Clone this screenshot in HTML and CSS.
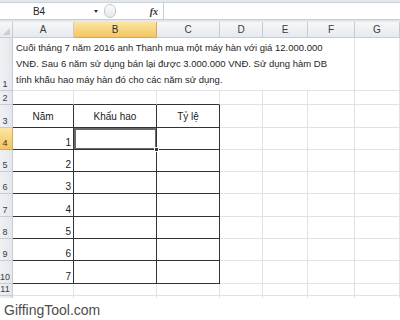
FILE: index.html
```html
<!DOCTYPE html>
<html lang="vi">
<head>
  <meta charset="UTF-8">
  <meta name="viewport" content="width=device-width, initial-scale=1.0">
  <title>Hàm DB - khấu hao</title>
  <link rel="stylesheet" href="styles.css">
</head>
<body>
  <div class="ribbon"></div>
  <!-- thanh công thức -->
  <div class="fbar">
    <div class="namebox"><span class="name">B4</span><span class="drop"></span></div>
    <div class="fx-zone"><span class="knob"></span><span class="fx">fx</span></div>
    <div class="input"></div>
  </div>
  <div class="gap"></div>
  <div class="sheet-wrap">
    <table class="sheet">
      <colgroup>
        <col style="width:13px"><col style="width:61px"><col style="width:83px"><col style="width:63px">
        <col style="width:43px"><col style="width:45px"><col style="width:47px"><col style="width:45px">
      </colgroup>
      <tr class="colhead">
        <th class="corner"><span class="tri"></span></th>
        <th>A</th><th class="on">B</th><th>C</th><th>D</th><th>E</th><th>F</th><th>G</th>
      </tr>
      <tr class="r1">
        <th class="rh">1</th>
        <td colspan="6" class="note">Cuối tháng 7 năm 2016 anh Thanh mua một máy hàn với giá 12.000.000<br>VNĐ. Sau 6 năm sử dụng bán lại được 3.000.000 VNĐ. Sử dụng hàm DB<br>tính khấu hao máy hàn đó cho các năm sử dụng.</td>
        <td></td>
      </tr>
      <tr class="r2">
        <th class="rh">2</th>
        <td class="top"></td><td class="top"></td><td class="top"></td><td></td><td></td><td></td><td></td>
      </tr>
      <tr class="r3">
        <th class="rh">3</th>
        <td class="box head">Năm</td><td class="box head">Khấu hao</td><td class="box head">Tỷ lệ</td><td></td><td></td><td></td><td></td>
      </tr>
      <tr class="rn">
        <th class="rh on">4</th>
        <td class="box num">1</td><td class="box sel"></td><td class="box"></td><td></td><td></td><td></td><td></td>
      </tr>
      <tr class="rn">
        <th class="rh">5</th>
        <td class="box num">2</td><td class="box"></td><td class="box"></td><td></td><td></td><td></td><td></td>
      </tr>
      <tr class="rn">
        <th class="rh">6</th>
        <td class="box num">3</td><td class="box"></td><td class="box"></td><td></td><td></td><td></td><td></td>
      </tr>
      <tr class="rn tall">
        <th class="rh">7</th>
        <td class="box num">4</td><td class="box"></td><td class="box"></td><td></td><td></td><td></td><td></td>
      </tr>
      <tr class="rn">
        <th class="rh">8</th>
        <td class="box num">5</td><td class="box"></td><td class="box"></td><td></td><td></td><td></td><td></td>
      </tr>
      <tr class="rn">
        <th class="rh">9</th>
        <td class="box num">6</td><td class="box"></td><td class="box"></td><td></td><td></td><td></td><td></td>
      </tr>
      <tr class="rn tall">
        <th class="rh">10</th>
        <td class="box num">7</td><td class="box"></td><td class="box"></td><td></td><td></td><td></td><td></td>
      </tr>
      <tr class="r11">
        <th class="rh">11</th>
        <td></td><td></td><td></td><td></td><td></td><td></td><td></td>
      </tr>
      <tr class="r12">
        <th class="rh"></th>
        <td></td><td></td><td></td><td></td><td></td><td></td><td></td>
      </tr>
    </table>
  </div>
  <div class="mark">GiffingTool.com</div>
</body>
</html>
```

FILE: styles.css
```css
html, body {
  margin: 0;
  padding: 0;
}
body {
  width: 400px;
  height: 320px;
  overflow: hidden;
  background: #fff;
  font-family: "Liberation Sans", Arial, sans-serif;
  color: #222;
}
.ribbon {
  height: 2px;
  background: #e2e7ed;
  border-bottom: 1px solid #cbd1d9;
}
/* thanh công thức */
.fbar {
  display: flex;
  height: 16px;
  border-bottom: 1px solid #c6ccd4;
  background: #fff;
}
.namebox {
  width: 102px;
  display: flex;
  align-items: center;
}
.name {
  flex: 1;
  text-align: center;
  font-size: 10px;
  padding-right: 16px;
}
.drop {
  width: 0;
  height: 0;
  border-left: 2px solid transparent;
  border-right: 2px solid transparent;
  border-top: 3px solid #333;
  margin-right: 4px;
}
.fx-zone {
  width: 62px;
  display: flex;
  align-items: center;
  padding-left: 2px;
  box-sizing: border-box;
  border-right: 1px solid #c6ccd4;
}
.knob {
  width: 10px;
  height: 12px;
  border: 1px solid #c3c8ce;
  border-radius: 7px;
  background: linear-gradient(#fafbfc, #e6e9ed);
}
.fx {
  margin-left: auto;
  margin-right: 5px;
  font: italic bold 10px "Liberation Serif", serif;
  color: #333;
}
.input {
  flex: 1;
}
.gap {
  height: 2px;
  background: #e4e8ed;
}
/* bảng tính */
.sheet-wrap {
  height: 276px;
  overflow: hidden;
}
.sheet {
  table-layout: fixed;
  width: 400px;
  border-collapse: separate;
  border-spacing: 0;
}
.sheet th,
.sheet td {
  box-sizing: border-box;
  padding: 0;
  border-right: 1px solid #e1e2e3;
  border-bottom: 1px solid #e1e2e3;
  font-size: 10px;
  white-space: nowrap;
  overflow: hidden;
}
.sheet th {
  font-weight: normal;
  color: #3c3c3c;
  background: linear-gradient(#f7f8fa, #e6e9ee);
  border-right-color: #c7ccd3;
  border-bottom-color: #c7ccd3;
}
.colhead th {
  height: 16px;
}
.corner {
  position: relative;
}
.tri {
  position: absolute;
  right: 2px;
  bottom: 2px;
  width: 0;
  height: 0;
  border-left: 7px solid transparent;
  border-bottom: 7px solid #c9ced5;
}
.sheet th.on {
  background: linear-gradient(#fbe5a6, #f3c662);
  border-right-color: #dca84a;
  border-bottom-color: #dca84a;
  color: #333;
}
.sheet th.rh {
  vertical-align: bottom;
  text-align: center;
  font-size: 9px;
  padding-right: 2px;
  padding-bottom: 1px;
  background: linear-gradient(to right, #eef1f4, #e4e8ec);
}
.sheet th.rh.on {
  background: linear-gradient(#fbe5a6, #f3c662);
}
.r1 th, .r1 td { height: 53px; }
.r2 th, .r2 td { height: 14px; }
.r3 th, .r3 td { height: 23px; }
.rn th, .rn td { height: 22px; }
.rn.tall th, .rn.tall td { height: 23px; }
.r11 th, .r11 td { height: 12px; }
.r12 th, .r12 td { height: 8px; }
.sheet td.note {
  vertical-align: bottom;
  padding: 0 0 2px 3px;
  line-height: 16px;
  font-size: 9.5px;
  color: #1e1e1e;
}
.sheet td.top {
  border-bottom-color: #333;
}
.sheet td.box {
  border-right-color: #333;
  border-bottom-color: #333;
}
.sheet td.head {
  text-align: center;
  vertical-align: middle;
}
.sheet td.num {
  text-align: right;
  vertical-align: bottom;
  padding-right: 2px;
  padding-bottom: 1px;
}
.sheet td.sel {
  position: relative;
  box-shadow: inset 2px 2px 0 #6a6a6a, inset -1px -1px 0 #6a6a6a;
  overflow: visible;
}
.sel::after {
  content: '';
  position: absolute;
  right: -3px;
  bottom: -3px;
  width: 3px;
  height: 3px;
  background: #333;
  border: 1px solid #fff;
}
.mark {
  padding: 3px 0 0 4px;
  font-size: 14px;
  color: #4d4d4d;
  line-height: 18px;
}
```
